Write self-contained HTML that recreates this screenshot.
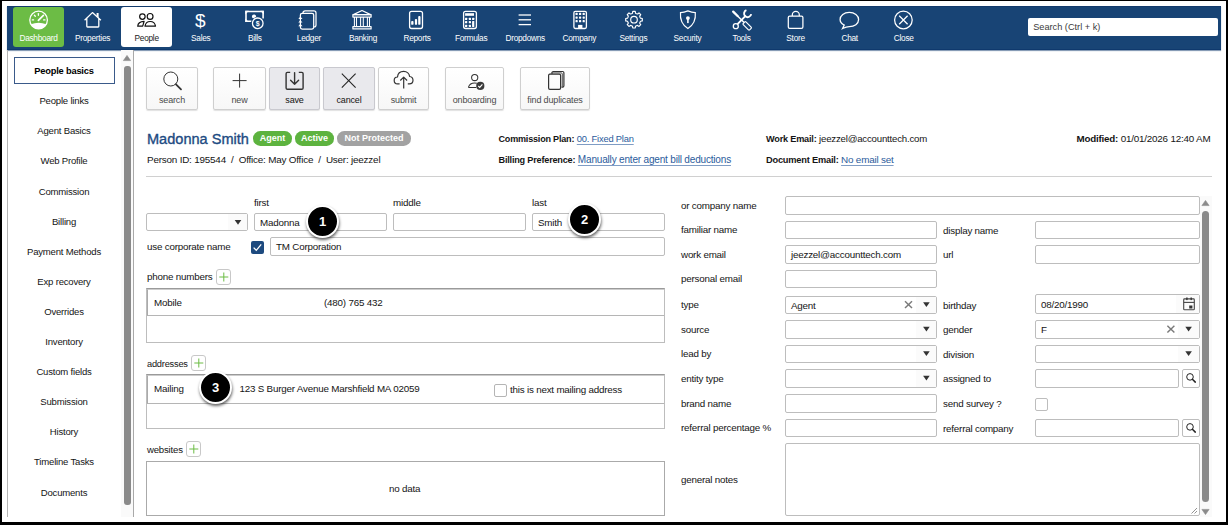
<!DOCTYPE html><html><head><meta charset="utf-8"><style>
*{box-sizing:border-box;margin:0;padding:0}
html,body{width:1228px;height:525px;overflow:hidden;background:#000}
body{font-family:"Liberation Sans",sans-serif;color:#222;position:relative}
#page{position:absolute;left:2px;top:1px;width:1224px;height:521px;background:#fff}
.a{position:absolute;white-space:pre;line-height:1}
#nav{position:absolute;left:7px;top:6px;width:1214px;height:44px;background:#184475;border-top:1px solid #123a6c;border-bottom:1px solid #0f396d;box-shadow:0 1px 0.8px rgba(15,57,109,.5)}
.ni{position:absolute;top:7px;width:51px;height:40px;border-radius:3px}
.nl{position:absolute;top:34.3px;width:51px;text-align:center;font-size:8.3px;letter-spacing:-0.27px;color:#fff;line-height:8px;white-space:pre}
#search{position:absolute;left:1028px;top:18px;width:190px;height:18px;background:#fff;border-radius:2px;font-size:9.2px;color:#3a3a3a;padding-left:5.2px;line-height:19.6px;white-space:pre}
svg.ov{position:absolute;left:0;top:0;overflow:visible}
.sb{position:absolute;left:7px;width:114px;text-align:center;font-size:9.55px;letter-spacing:-0.2px;line-height:10px;color:#141414;white-space:pre}
.btn{position:absolute;top:67px;height:42.5px;border:1px solid #cfcfcf;border-radius:2px;background:linear-gradient(#fff,#f7f7f7);box-shadow:0 1px 1px rgba(0,0,0,.12)}
.btn.g{background:#e9e9ed;border-color:#c9c9cf}
.btn.g .bl{color:#141414}
.bl{position:absolute;left:0;right:0;top:28.2px;text-align:center;font-size:9px;letter-spacing:-0.15px;color:#4a4a4a;line-height:9px;white-space:pre}
.inp{position:absolute;height:18.3px;border:1px solid #bdbdbd;border-radius:2px;background:#fff}
.lab{position:absolute;font-size:9.8px;letter-spacing:-0.2px;line-height:10px;color:#141414;white-space:pre}
.txt{position:absolute;font-size:9.8px;letter-spacing:-0.2px;line-height:10px;color:#141414;white-space:pre}
.badge{position:absolute;top:131px;height:14.6px;border-radius:7.3px;color:#fff;font-weight:bold;font-size:9px;line-height:14px;text-align:center;white-space:pre}
.num{position:absolute;width:33px;height:33px;border-radius:50%;background:#000;border:2px solid #fff;box-shadow:0.5px 2px 3px rgba(0,0,0,.6);color:#fff;font-weight:bold;font-size:13px;line-height:30px;text-align:center}
u{text-decoration-thickness:1px;text-underline-offset:1.5px;text-decoration-color:#7f9cc4}
.plus{position:absolute;width:15px;height:16px;border:1px solid #c8c8c8;border-radius:3px;background:#fff}
</style></head><body>
<div id="page"></div>
<div id="nav"></div>
<div class="ni" style="left:13px;background:#6cbc45"></div>
<div class="ni" style="left:121px;background:#fff"></div>
<div class="nl" style="left:13.00px;color:#fff">Dashboard</div>
<div class="nl" style="left:67.08px;color:#fff">Properties</div>
<div class="nl" style="left:121.16px;color:#222">People</div>
<div class="nl" style="left:175.24px;color:#fff">Sales</div>
<div class="nl" style="left:229.32px;color:#fff">Bills</div>
<div class="nl" style="left:283.40px;color:#fff">Ledger</div>
<div class="nl" style="left:337.48px;color:#fff">Banking</div>
<div class="nl" style="left:391.56px;color:#fff">Reports</div>
<div class="nl" style="left:445.64px;color:#fff">Formulas</div>
<div class="nl" style="left:499.72px;color:#fff">Dropdowns</div>
<div class="nl" style="left:553.80px;color:#fff">Company</div>
<div class="nl" style="left:607.88px;color:#fff">Settings</div>
<div class="nl" style="left:661.96px;color:#fff">Security</div>
<div class="nl" style="left:716.04px;color:#fff">Tools</div>
<div class="nl" style="left:770.12px;color:#fff">Store</div>
<div class="nl" style="left:824.20px;color:#fff">Chat</div>
<div class="nl" style="left:878.28px;color:#fff">Close</div>
<div id="search">Search (Ctrl + k)</div>
<div style="position:absolute;left:7px;top:50px;width:1px;height:467px;background:#b5b5b5"></div>
<div style="position:absolute;left:133px;top:50px;width:1px;height:467px;background:#a9a9a9"></div>
<div style="position:absolute;left:121px;top:50px;width:12px;height:467px;background:#fafafa"></div>
<div style="position:absolute;left:124px;top:65.5px;width:7px;height:439px;background:#8a8a8a;border-radius:3px"></div>
<div style="position:absolute;left:14px;top:57px;width:101px;height:27px;border:1px solid #3a5a8a"></div>
<div class="sb" style="top:66.1px;font-weight:bold;font-size:9.3px;color:#000;">People basics</div>
<div class="sb" style="top:96.2px;">People links</div>
<div class="sb" style="top:126.3px;">Agent Basics</div>
<div class="sb" style="top:156.4px;">Web Profile</div>
<div class="sb" style="top:186.5px;">Commission</div>
<div class="sb" style="top:216.6px;">Billing</div>
<div class="sb" style="top:246.7px;">Payment Methods</div>
<div class="sb" style="top:276.8px;">Exp recovery</div>
<div class="sb" style="top:306.9px;">Overrides</div>
<div class="sb" style="top:337.0px;">Inventory</div>
<div class="sb" style="top:367.1px;">Custom fields</div>
<div class="sb" style="top:397.2px;">Submission</div>
<div class="sb" style="top:427.3px;">History</div>
<div class="sb" style="top:457.4px;">Timeline Tasks</div>
<div class="sb" style="top:487.5px;">Documents</div>
<div class="btn" style="left:146px;width:52px"><div class="bl">search</div></div>
<div class="btn" style="left:213px;width:53px"><div class="bl">new</div></div>
<div class="btn g" style="left:269px;width:51px"><div class="bl">save</div></div>
<div class="btn g" style="left:323px;width:52px"><div class="bl">cancel</div></div>
<div class="btn" style="left:378px;width:51px"><div class="bl">submit</div></div>
<div class="btn" style="left:445px;width:59px"><div class="bl">onboarding</div></div>
<div class="btn" style="left:520px;width:70px"><div class="bl">find duplicates</div></div>
<div class="a" style="left:147px;top:132px;font-size:14.55px;color:#1d4b82;-webkit-text-stroke:0.35px #1d4b82">Madonna Smith</div>
<div class="badge" style="left:253px;width:39px;background:#5db33f">Agent</div>
<div class="badge" style="left:295px;width:39px;background:#5db33f">Active</div>
<div class="badge" style="left:337px;width:74px;background:#a2a2a2">Not Protected</div>
<div class="txt" style="left:147px;top:154.5px;font-size:9.88px">Person ID: 195544  /  Office: May Office  /  User: jeezzel</div>
<div class="txt" style="left:498.5px;top:134px"><b style="font-size:9.05px">Commission Plan:</b> <u style="color:#2b5c9c;font-size:9.35px">00. Fixed Plan</u></div>
<div class="txt" style="left:498.5px;top:155px"><b style="font-size:9.14px">Billing Preference:</b> <u style="color:#2b5c9c;font-size:10.05px">Manually enter agent bill deductions</u></div>
<div class="txt" style="left:766px;top:134px"><b style="font-size:9.17px">Work Email:</b> <span style="font-size:9.65px">jeezzel@accounttech.com</span></div>
<div class="txt" style="left:766px;top:155px"><b style="font-size:9.26px">Document Email:</b> <u style="color:#2b5c9c;font-size:9.9px">No email set</u></div>
<div class="txt" style="left:1076.5px;top:134px"><b style="font-size:9.77px">Modified:</b> <span style="font-size:9.85px">01/01/2026 12:40 AM</span></div>
<div style="position:absolute;left:146px;top:176px;width:1066px;height:1px;background:#d0d0d0"></div>
<div class="lab" style="left:254px;top:198px">first</div>
<div class="lab" style="left:393px;top:198px">middle</div>
<div class="lab" style="left:532px;top:198px">last</div>
<div class="inp" style="left:146px;top:213px;width:102px;height:18px"></div>
<div class="inp" style="left:254px;top:213px;width:133px;height:18px"><div class="txt" style="left:5px;top:4px">Madonna</div></div>
<div class="inp" style="left:393px;top:213px;width:133px;height:18px"></div>
<div class="inp" style="left:532px;top:213px;width:133px;height:18px"><div class="txt" style="left:5px;top:4px">Smith</div></div>
<div class="lab" style="left:147px;top:242px">use corporate name</div>
<div style="position:absolute;left:251px;top:241px;width:13px;height:13px;background:#1d4a7f;border-radius:2px"></div>
<div class="inp" style="left:270px;top:237px;width:395px;height:19px"><div class="txt" style="left:5px;top:4px">TM Corporation</div></div>
<div class="lab" style="left:147px;top:272px">phone numbers</div>
<div class="plus" style="left:216px;top:269px"></div>
<div style="position:absolute;left:146px;top:288px;width:519px;height:55px;border:1px solid #bdbdbd;border-top:1px solid #9a9a9a"></div>
<div style="position:absolute;left:147px;top:289px;width:517px;height:27px;border-top:1px solid #cdcdcd;border-left:1px solid #aaa;border-bottom:1px solid #b5b5b5"></div>
<div class="txt" style="left:154px;top:297.5px">Mobile</div>
<div class="txt" style="left:324px;top:297.5px">(480) 765 432</div>
<div class="lab" style="left:147px;top:358.5px;font-size:9.23px">addresses</div>
<div class="plus" style="left:191px;top:355px"></div>
<div style="position:absolute;left:146px;top:374px;width:519px;height:55px;border:1px solid #bdbdbd;border-top:1px solid #9a9a9a"></div>
<div style="position:absolute;left:147px;top:375px;width:517px;height:29px;border-top:1px solid #cdcdcd;border-left:1px solid #aaa;border-bottom:1px solid #b5b5b5"></div>
<div class="txt" style="left:154px;top:383.5px">Mailing</div>
<div class="txt" style="left:239.5px;top:383.5px">123 S Burger Avenue Marshfield MA 02059</div>
<div style="position:absolute;left:494px;top:384px;width:13px;height:13px;border:1px solid #b5b5b5;border-radius:2px;background:#fff"></div>
<div class="txt" style="left:510px;top:384.5px">this is next mailing address</div>
<div class="lab" style="left:147px;top:444.5px;font-size:9.6px">websites</div>
<div class="plus" style="left:186px;top:441px"></div>
<div style="position:absolute;left:146px;top:461px;width:519px;height:55px;border:1px solid #aaa"></div>
<div class="txt" style="left:389px;top:483.5px">no data</div>
<div class="num" style="left:306px;top:204.7px">1</div>
<div class="num" style="left:568px;top:202.7px">2</div>
<div class="num" style="left:199px;top:370.9px">3</div>
<div class="lab" style="left:681px;top:200.9px">or company name</div>
<div class="lab" style="left:681px;top:225.4px">familiar name</div>
<div class="lab" style="left:681px;top:249.9px">work email</div>
<div class="lab" style="left:681px;top:274.4px">personal email</div>
<div class="lab" style="left:681px;top:300.4px">type</div>
<div class="lab" style="left:681px;top:324.9px">source</div>
<div class="lab" style="left:681px;top:349.4px">lead by</div>
<div class="lab" style="left:681px;top:373.9px">entity type</div>
<div class="lab" style="left:681px;top:398.9px">brand name</div>
<div class="lab" style="left:681px;top:423.4px">referral percentage %</div>
<div class="lab" style="left:681px;top:475px">general notes</div>
<div class="lab" style="left:943px;top:225.8px">display name</div>
<div class="lab" style="left:943px;top:250.3px">url</div>
<div class="lab" style="left:943px;top:300.8px">birthday</div>
<div class="lab" style="left:943px;top:325.3px">gender</div>
<div class="lab" style="left:943px;top:349.8px">division</div>
<div class="lab" style="left:943px;top:374.3px">assigned to</div>
<div class="lab" style="left:943px;top:399.3px">send survey ?</div>
<div class="lab" style="left:943px;top:423.8px">referral company</div>
<div class="inp" style="left:785px;top:196px;width:415px;height:19px"></div>
<div class="inp" style="left:785px;top:221px;width:152px;height:18px"></div>
<div class="inp" style="left:785px;top:245px;width:152px;height:19px"><div class="txt" style="left:5px;top:4.2px">jeezzel@accounttech.com</div></div>
<div class="inp" style="left:785px;top:270px;width:152px;height:18px"></div>
<div class="inp" style="left:785px;top:296px;width:152px;height:18px"><div class="txt" style="left:5px;top:3.7px">Agent</div></div>
<div class="inp" style="left:785px;top:320px;width:152px;height:19px"></div>
<div class="inp" style="left:785px;top:345px;width:152px;height:18px"></div>
<div class="inp" style="left:785px;top:369px;width:152px;height:19px"></div>
<div class="inp" style="left:785px;top:394px;width:152px;height:19px"></div>
<div class="inp" style="left:785px;top:419px;width:152px;height:18px"></div>
<div class="inp" style="left:1035px;top:221px;width:165px;height:18px"></div>
<div class="inp" style="left:1035px;top:245px;width:165px;height:19px"></div>
<div class="inp" style="left:1035px;top:320px;width:165px;height:19px"><div class="txt" style="left:5px;top:4.2px">F</div></div>
<div class="inp" style="left:1035px;top:345px;width:165px;height:18px"></div>
<div class="inp" style="left:1035px;top:294px;width:165px;height:20px"><div class="txt" style="left:5px;top:5.4px">08/20/1990</div></div>
<div class="inp" style="left:1035px;top:369px;width:144px;height:19px"></div>
<div class="inp" style="left:1182px;top:369px;width:18px;height:19px"></div>
<div class="inp" style="left:1035px;top:419px;width:144px;height:18px"></div>
<div class="inp" style="left:1182px;top:419px;width:18px;height:18px"></div>
<div style="position:absolute;left:1035px;top:398px;width:13px;height:13px;border:1px solid #bdbdbd;border-radius:2px"></div>
<div class="inp" style="left:785px;top:443px;width:415px;height:73px"></div>
<div style="position:absolute;left:916px;top:297px;width:20px;height:16px;background:#fbfbfb"></div>
<div style="position:absolute;left:916px;top:321px;width:20px;height:17px;background:#fbfbfb"></div>
<div style="position:absolute;left:916px;top:346px;width:20px;height:16px;background:#fbfbfb"></div>
<div style="position:absolute;left:916px;top:370px;width:20px;height:17px;background:#fbfbfb"></div>
<div style="position:absolute;left:1178px;top:321px;width:21px;height:17px;background:#fbfbfb"></div>
<div style="position:absolute;left:1178px;top:346px;width:21px;height:16px;background:#fbfbfb"></div>
<div style="position:absolute;left:228px;top:214px;width:19px;height:16px;background:#fbfbfb"></div>
<div style="position:absolute;left:1176px;top:295px;width:23px;height:18px;background:#fbfbfb"></div>
<div style="position:absolute;left:1200px;top:196px;width:12px;height:321px;background:#fafafa"></div>
<div style="position:absolute;left:1202px;top:211px;width:7px;height:291px;background:#8a8a8a;border-radius:4px"></div>
<svg class="ov" width="1228" height="525" viewBox="0 0 1228 525"><g fill="none" stroke="#fff" stroke-width="1.3"><circle cx="38.6" cy="20" r="8.8"/></g><path d="M30.8,24.2 Q38.6,21.2 46.4,24.2 A8.8,8.8 0 0 1 30.8,24.2 Z" fill="#fff"/><g stroke="#fff" stroke-width="1.3" stroke-linecap="round"><line x1="38.4" y1="20.3" x2="43.4" y2="15.4" stroke-width="1.7"/><line x1="38.4" y1="13.6" x2="38.4" y2="15.3"/><line x1="34.4" y1="15.3" x2="35.3" y2="16.3"/><line x1="32.3" y1="19.9" x2="33.6" y2="19.9"/><line x1="43.6" y1="19.9" x2="45" y2="19.9"/></g><path d="M84.6,20.2 L92.4,12.6 L100.9,20.3 M86.8,18.6 V26.3 Q86.8,27 87.5,27 H98.1 Q98.8,27 98.8,26.3 V18.6" fill="none" stroke="#fff" stroke-width="1.3" stroke-linejoin="round"/><path d="M96.6,13.1 H98.6 V17.9 L96.6,16 Z" fill="#fff"/><g fill="none" stroke="#111" stroke-width="1.2" stroke-linejoin="round"><circle cx="142.4" cy="16.6" r="2.75"/><circle cx="150.1" cy="16.4" r="2.9"/><path d="M137.7,26.2 C137.9,23.5 140.1,21.5 144.1,21.4 L142.7,26.2 Z"/><path d="M145,26.2 C145.5,23.1 147.5,21.5 150.2,21.5 C153,21.5 155,23.1 155.5,26.2 Z"/></g><text x="200.4" y="26.9" font-family="Liberation Sans" font-size="19" fill="#fff" text-anchor="middle">$</text><g fill="none" stroke="#fff" stroke-width="1.6"><path d="M251.5,21.3 H246 V11.5 H263.1 V18.5"/><circle cx="254" cy="16.5" r="2.1" fill="#fff" stroke="none"/><circle cx="257.75" cy="23.3" r="5.6" fill="#184475" stroke="#184475" stroke-width="2"/><circle cx="257.75" cy="23.3" r="5.3" stroke-width="1.3"/></g><text x="257.7" y="25.9" font-family="Liberation Sans" font-size="7" font-weight="bold" fill="#fff" text-anchor="middle">$</text><path d="M245.3,10.8 h3.6 l-3.6,3.6 z M263.8,10.8 h-3.6 l3.6,3.6 z M245.3,22 h3.6 l-3.6,-3.6 z" fill="#fff"/><g fill="none" stroke="#fff" stroke-width="1.25"><path d="M302.9,13.2 Q303.1,10.9 305.1,10.9 H313.9 Q316,10.9 316,13 V25 Q316,26.9 314,27"/><rect x="300.4" y="13.3" width="13.3" height="15.7" rx="1.7"/></g><g fill="#fff"><path d="M298.3,18.9 L300.4,16.5 L302.5,18.9 Z"/><path d="M298.3,22.6 L300.4,20.2 L302.5,22.6 Z"/><path d="M298.3,26.2 L300.4,23.8 L302.5,26.2 Z"/></g><g fill="none" stroke="#fff" stroke-width="1.2" stroke-linejoin="round"><path d="M353.4,14.6 L362,10.5 L370.6,14.6 Z"/><rect x="352.9" y="14.6" width="18.2" height="2.5"/><rect x="352.9" y="26.7" width="18.2" height="2.2"/><path d="M354.4,17.1 V26.7 M356.5,17.1 V26.7 M360.6,17.1 V26.7 M363.3,17.1 V26.7 M367.4,17.1 V26.7 M369.5,17.1 V26.7" stroke-width="1.05"/></g><g fill="none" stroke="#fff" stroke-width="1.3"><rect x="409.6" y="11.3" width="12.9" height="17.2" rx="2"/></g><g fill="#fff"><rect x="411.2" y="20.9" width="2.3" height="3.9" rx="0.9"/><rect x="414.9" y="18.9" width="2.2" height="5.9" rx="0.9"/><rect x="418.2" y="16.1" width="2.3" height="8.7" rx="0.9"/></g><g fill="none" stroke="#fff" stroke-width="1.3"><rect x="463.6" y="11.3" width="12.8" height="17.2" rx="2"/></g><g fill="#fff"><rect x="465.1" y="13.2" width="8.9" height="2.6"/><rect x="465.00" y="17.70" width="2.2" height="2.2" rx="0.5"/><rect x="468.80" y="17.70" width="2.2" height="2.2" rx="0.5"/><rect x="472.10" y="17.70" width="2.2" height="2.2" rx="0.5"/><rect x="465.00" y="21.10" width="2.2" height="2.2" rx="0.5"/><rect x="468.80" y="21.10" width="2.2" height="2.2" rx="0.5"/><rect x="465.00" y="24.80" width="2.2" height="2.2" rx="0.5"/><rect x="468.80" y="24.80" width="2.2" height="2.2" rx="0.5"/><rect x="472.1" y="21.1" width="2.2" height="5.9" rx="0.5"/></g><g stroke="#fff" stroke-width="1.3"><line x1="518.6" y1="15" x2="531" y2="15"/><line x1="518.6" y1="19.8" x2="531" y2="19.8"/><line x1="518.6" y1="24.6" x2="531" y2="24.6"/></g><g fill="none" stroke="#fff" stroke-width="1.3"><rect x="573.9" y="11.3" width="12.5" height="17.2" rx="1.4"/></g><g fill="#fff"><rect x="575.50" y="12.80" width="2.2" height="2.2" rx="0.6"/><rect x="575.50" y="16.50" width="2.2" height="2.2" rx="0.6"/><rect x="575.50" y="20.10" width="2.2" height="2.2" rx="0.6"/><rect x="579.00" y="12.80" width="2.2" height="2.2" rx="0.6"/><rect x="579.00" y="16.50" width="2.2" height="2.2" rx="0.6"/><rect x="579.00" y="20.10" width="2.2" height="2.2" rx="0.6"/><rect x="582.60" y="12.80" width="2.2" height="2.2" rx="0.6"/><rect x="582.60" y="16.50" width="2.2" height="2.2" rx="0.6"/><rect x="582.60" y="20.10" width="2.2" height="2.2" rx="0.6"/><rect x="578.1" y="24.9" width="4.3" height="4"/></g><polygon points="631.51,13.69 632.49,13.17 632.76,11.39 635.24,11.39 635.51,13.17 636.49,13.69 637.55,14.02 639.00,12.95 640.75,14.70 639.68,16.15 640.01,17.21 640.53,18.19 642.31,18.46 642.31,20.94 640.53,21.21 640.01,22.19 639.68,23.25 640.75,24.70 639.00,26.45 637.55,25.38 636.49,25.71 635.51,26.23 635.24,28.01 632.76,28.01 632.49,26.23 631.51,25.71 630.45,25.38 629.00,26.45 627.25,24.70 628.32,23.25 627.99,22.19 627.47,21.21 625.69,20.94 625.69,18.46 627.47,18.19 627.99,17.21 628.32,16.15 627.25,14.70 629.00,12.95 630.45,14.02" fill="none" stroke="#fff" stroke-width="1.15" stroke-linejoin="round"/><circle cx="634" cy="19.7" r="3.3" fill="none" stroke="#fff" stroke-width="1.15"/><path d="M680.5,12.6 Q684,12.4 687.9,10.9 Q691.8,12.4 695.3,12.6 Q696.3,23 687.9,28.6 Q679.5,23 680.5,12.6 Z" fill="none" stroke="#fff" stroke-width="1.2"/><circle cx="687.9" cy="18.1" r="1.9" fill="#fff"/><rect x="687.1" y="18.5" width="1.6" height="4.6" fill="#fff"/><g stroke="#fff" fill="none" stroke-linecap="round"><path d="M733.2,11.6 L737.6,16" stroke-width="2.3"/><path d="M737.6,16 L743.6,22" stroke-width="1.5"/><rect x="745.3" y="21.4" width="3.8" height="9" rx="0.8" transform="rotate(-45 747.2 25.9)" stroke-width="1.2"/><path d="M745.3,16.2 L738,23.6" stroke-width="1.9"/><circle cx="735.8" cy="26.2" r="2.5" stroke-width="1.3"/><path d="M746.4,10.2 A3.6,3.6 0 1 0 751.2,14.2" stroke-width="1.9" stroke-linecap="butt"/></g><g fill="none" stroke="#fff" stroke-width="1.25"><rect x="788.3" y="16.1" width="14.6" height="12.2" rx="1.4"/><path d="M792.3,16 V14.9 A3.5,3.5 0 0 1 799.3,14.9 V16"/></g><path d="M842.6,28.5 L844.2,25 C841,23.6 840.1,21.5 840.1,19.6 C840.1,15.4 844,12.4 849.3,12.4 C854.5,12.4 858.6,15.4 858.6,19.6 C858.6,23.8 854.5,26.6 849.3,26.6 C847.4,26.6 845.8,26.9 842.6,28.5 Z" fill="none" stroke="#fff" stroke-width="1.3"/><g fill="none" stroke="#fff" stroke-width="1.25"><circle cx="903.4" cy="20" r="8.8"/><path d="M899.2,15.8 L907.6,24.2 M907.6,15.8 L899.2,24.2"/></g><g fill="none" stroke="#333" stroke-width="1"><circle cx="170.8" cy="79" r="7"/></g><line x1="176" y1="84.3" x2="181" y2="89.3" stroke="#333" stroke-width="1.8" stroke-linecap="round"/><g stroke="#333" stroke-width="1"><line x1="232.6" y1="80.6" x2="246.6" y2="80.6"/><line x1="239.6" y1="73.6" x2="239.6" y2="87.6"/></g><g fill="none" stroke="#333" stroke-width="1.4" stroke-linejoin="round"><path d="M290.2,72.4 H287.4 Q286.1,72.4 286.1,73.7 V88 Q286.1,89.3 287.4,89.3 H301.8 Q303.1,89.3 303.1,88 V73.7 Q303.1,72.4 301.8,72.4 H298.8"/><path d="M294.6,72.6 V84.2 M290.6,80.2 L294.6,84.2 L298.6,80.2" stroke-linecap="round"/></g><g stroke="#222" stroke-width="1.05"><line x1="341.8" y1="73.7" x2="355.6" y2="87.6"/><line x1="355.6" y1="73.7" x2="341.8" y2="87.6"/></g><path d="M399.6,83.8 H397.5 C395.2,83.8 394.2,82 394.2,80.4 C394.2,78.5 395.6,77 397.5,77 C397.8,73.5 400.3,71.4 403.7,71.4 C407,71.4 409.3,73.8 409.6,76.5 C411.6,76.8 413,78.3 413,80.2 C413,82.3 411.4,83.8 409.3,83.8 H407.8 M403.7,88.5 V77.3 M400.3,80.5 L403.7,77.1 L407.1,80.5" fill="none" stroke="#333" stroke-width="1.2" stroke-linejoin="round"/><g fill="none" stroke="#333" stroke-width="1.05"><circle cx="474.7" cy="77.5" r="3.1"/><path d="M476.2,87.4 H468.9 Q468.4,87.4 468.6,86.8 C469.3,84.4 471.4,82.9 474.7,82.9 C475.5,82.9 476.2,83 476.8,83.2"/></g><circle cx="480.3" cy="85.9" r="4.1" fill="#3a3a3a"/><path d="M478.3,86 L479.7,87.4 L482.4,84.4" fill="none" stroke="#fff" stroke-width="1.1"/><g fill="none" stroke="#333" stroke-width="1.2"><path d="M552,74 V72.8 Q552,71.5 553.3,71.5 H562.6 Q563.9,71.5 563.9,72.8 V85.8 Q563.9,87.1 562.6,87.1 H561.5"/><path d="M550.2,73 V73.2 M561.2,73 V73" /><rect x="548.6" y="74.2" width="12" height="15.2" rx="1.3"/></g><path d="M551.3,72.9 H561.2 Q562.3,72.9 562.3,74 V87.2" fill="none" stroke="#555" stroke-width="1"/><path d="M234.7,219.9 h6.6 l-3.3,4.8 z" fill="#333"/><path d="M923.1,302.3 h6.6 l-3.3,4.8 z" fill="#333"/><path d="M923.1,326.8 h6.6 l-3.3,4.8 z" fill="#333"/><path d="M923.1,351.3 h6.6 l-3.3,4.8 z" fill="#333"/><path d="M923.1,375.8 h6.6 l-3.3,4.8 z" fill="#333"/><path d="M1185.3,326.8 h6.6 l-3.3,4.8 z" fill="#333"/><path d="M1185.3,351.3 h6.6 l-3.3,4.8 z" fill="#333"/><g stroke="#7a7a7a" stroke-width="1.45"><line x1="905.0" y1="301.3" x2="912.0" y2="308.1"/><line x1="912.0" y1="301.3" x2="905.0" y2="308.1"/></g><g stroke="#7a7a7a" stroke-width="1.45"><line x1="1167.4" y1="325.8" x2="1174.4" y2="332.6"/><line x1="1174.4" y1="325.8" x2="1167.4" y2="332.6"/></g><g fill="none" stroke="#444" stroke-width="1.1"><rect x="1183.7" y="298.9" width="10.6" height="10.8" rx="0.8"/><line x1="1183.7" y1="302.4" x2="1194.3" y2="302.4"/></g><g fill="#333"><rect x="1186.2" y="297.5" width="1.4" height="2.6"/><rect x="1190.5" y="297.5" width="1.4" height="2.6"/><rect x="1189.2" y="305.5" width="3.2" height="3"/></g><circle cx="1190" cy="376.9" r="3.3" fill="none" stroke="#222" stroke-width="1"/><line x1="1192.4" y1="379.3" x2="1195.3" y2="382.1" stroke="#222" stroke-width="1.5" stroke-linecap="round"/><circle cx="1190" cy="426.9" r="3.3" fill="none" stroke="#222" stroke-width="1"/><line x1="1192.4" y1="429.3" x2="1195.3" y2="432.1" stroke="#222" stroke-width="1.5" stroke-linecap="round"/><path d="M253.6,247.6 L256.3,250.3 L261.2,244.4" fill="none" stroke="#fff" stroke-width="1.3"/><g stroke="#6cbc45" stroke-width="1"><line x1="219.3" y1="277.0" x2="228.3" y2="277.0"/><line x1="223.8" y1="272.5" x2="223.8" y2="281.5"/></g><g stroke="#6cbc45" stroke-width="1"><line x1="194.3" y1="363.0" x2="203.3" y2="363.0"/><line x1="198.8" y1="358.5" x2="198.8" y2="367.5"/></g><g stroke="#6cbc45" stroke-width="1"><line x1="189.3" y1="449.0" x2="198.3" y2="449.0"/><line x1="193.8" y1="444.5" x2="193.8" y2="453.5"/></g><path d="M123.4,60.6 L127,55.4 L130.6,60.6 Z" fill="#8a8a8a" stroke="#8a8a8a" stroke-width="0.6" stroke-linejoin="round"/><path d="M1201.9,205.6 L1205.5,200.4 L1209.1,205.6 Z" fill="#8a8a8a" stroke="#8a8a8a" stroke-width="0.6" stroke-linejoin="round"/><path d="M1201.9,509.4 L1205.5,514.6 L1209.1,509.4 Z" fill="#8a8a8a" stroke="#8a8a8a" stroke-width="0.6" stroke-linejoin="round"/><g stroke="#777" stroke-width="0.8"><line x1="1191.5" y1="513.5" x2="1197" y2="508"/><line x1="1194.5" y1="513.5" x2="1197" y2="511"/></g></svg>
</body></html>
